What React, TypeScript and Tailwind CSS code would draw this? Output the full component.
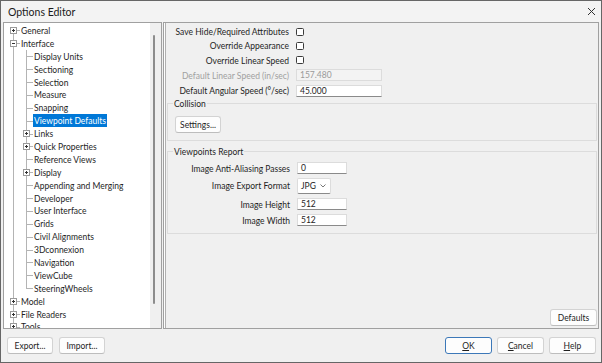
import React from "react";

type TreeNode = {
  label: string;
  level: 0 | 1;
  box?: "+" | "-";
  first?: boolean;
  last?: boolean;
  selected?: boolean;
};

const tree: TreeNode[] = [
  { label: "General", level: 0, box: "+", first: true },
  { label: "Interface", level: 0, box: "-" },
  { label: "Display Units", level: 1 },
  { label: "Sectioning", level: 1 },
  { label: "Selection", level: 1 },
  { label: "Measure", level: 1 },
  { label: "Snapping", level: 1 },
  { label: "Viewpoint Defaults", level: 1, selected: true },
  { label: "Links", level: 1, box: "+" },
  { label: "Quick Properties", level: 1, box: "+" },
  { label: "Reference Views", level: 1 },
  { label: "Display", level: 1, box: "+" },
  { label: "Appending and Merging", level: 1 },
  { label: "Developer", level: 1 },
  { label: "User Interface", level: 1 },
  { label: "Grids", level: 1 },
  { label: "Civil Alignments", level: 1 },
  { label: "3Dconnexion", level: 1 },
  { label: "Navigation", level: 1 },
  { label: "ViewCube", level: 1 },
  { label: "SteeringWheels", level: 1, last: true },
  { label: "Model", level: 0, box: "+" },
  { label: "File Readers", level: 0, box: "+" },
  { label: "Tools", level: 0, box: "+" },
];

// one 13px gutter column of the tree: connector lines and the +/- box
function Gutter({
  line,
  stub,
  box,
}: {
  line?: "full" | "top" | "bottom";
  stub?: boolean;
  box?: "+" | "-";
}) {
  return (
    <span className="relative w-[13px] h-full shrink-0">
      {line === "full" && <span className="absolute left-[6px] top-0 bottom-0 w-px bg-[#b4b4b4]" />}
      {line === "top" && <span className="absolute left-[6px] top-0 h-1/2 w-px bg-[#b4b4b4]" />}
      {line === "bottom" && <span className="absolute left-[6px] top-1/2 bottom-0 w-px bg-[#b4b4b4]" />}
      {stub && <span className="absolute left-[6px] right-0 top-1/2 h-px bg-[#b4b4b4]" />}
      {box && (
        <span className="absolute left-[3px] top-1/2 -mt-[3.5px] w-[7px] h-[7px] border border-[#9a9a9a] bg-white flex items-center justify-center">
          <span className="absolute w-[3px] h-px bg-[#333]" />
          {box === "+" && <span className="absolute w-px h-[3px] bg-[#333]" />}
        </span>
      )}
    </span>
  );
}

function TreeRow({ node }: { node: TreeNode }) {
  return (
    <div className="flex items-center h-[12.9px] whitespace-nowrap">
      {node.level === 0 ? (
        <Gutter line={node.first ? "bottom" : "full"} stub box={node.box} />
      ) : (
        <>
          <Gutter line="full" />
          <Gutter line={node.last ? "top" : "full"} stub box={node.box} />
        </>
      )}
      <span
        className={`px-px h-full pt-[1px] leading-[12px] ${
          node.selected ? "bg-[#0078d7] text-white" : "text-[#1e1e1e]"
        }`}
      >
        {node.label}
      </span>
    </div>
  );
}

function Checkbox() {
  return <span className="block w-[8px] h-[8px] border border-[#3a3a3a] rounded-[1.5px] bg-white" />;
}

function Field({ value, w, disabled }: { value: string; w: string; disabled?: boolean }) {
  return (
    <span
      className={`flex items-center h-[12px] px-[3px] pt-[1px] border border-[#dcdcdc] border-b-[#8a8a8a] ${w} ${
        disabled ? "bg-[#f3f3f3] text-[#9a9a9a] border-b-[#dcdcdc]" : "bg-white text-[#1e1e1e]"
      }`}
    >
      {value}
    </span>
  );
}

function Button({ children, w = "w-[47px]", primary }: { children: React.ReactNode; w?: string; primary?: boolean }) {
  return (
    <button
      className={`h-[17px] ${w} flex items-center justify-center pt-[1px] rounded-[3px] bg-[#fdfdfd] text-[#1e1e1e] border ${
        primary ? "border-[#3c78b8]" : "border-[#d3d3d3] border-b-[#bdbdbd]"
      }`}
    >
      {children}
    </button>
  );
}

const topRows: { label: string; h: string; el: React.ReactNode; dim?: boolean }[] = [
  { label: "Save Hide/Required Attributes", h: "h-[13px]", el: <Checkbox /> },
  { label: "Override Appearance", h: "h-[15px]", el: <Checkbox /> },
  { label: "Override Linear Speed", h: "h-[14px]", el: <Checkbox /> },
  { label: "Default Linear Speed (in/sec)", h: "h-[16px]", el: <Field value="157.480" w="w-[86px]" disabled />, dim: true },
  { label: "Default Angular Speed (°/sec)", h: "h-[15px]", el: <Field value="45.000" w="w-[86px]" /> },
];

export default function App() {
  return (
    <div className="w-[602px] h-[363px] flex flex-col bg-[#f0f0f0] border border-[#666] text-[8.5px] font-['Lato',sans-serif] text-[#1e1e1e] overflow-hidden">
      {/* title bar */}
      <div className="h-[21px] shrink-0 flex items-center justify-between pl-[7px] pr-[5px] pt-[2px] bg-[#f3f3f3]">
        <span className="text-[10.5px] text-[#1a1a1a]">Options Editor</span>
        <svg width="9" height="9" viewBox="0 0 9 9" className="mt-[-2px]">
          <path d="M1 1 L8 8 M8 1 L1 8" stroke="#333" strokeWidth="1" />
        </svg>
      </div>

      {/* main */}
      <div className="h-[307px] shrink-0 flex pl-[2px] pr-[2px] gap-[1px]">
        {/* tree */}
        <div className="w-[159px] h-full border border-[#a0a0a0] flex">
          <div className="flex-1 bg-white overflow-hidden pl-[3px] pt-[1px]">
            {tree.map((n) => (
              <TreeRow key={n.label} node={n} />
            ))}
          </div>
          <div className="w-[11px] bg-[#f0f0f0] pt-[12px] pl-[3px]">
            <div className="w-[2px] h-[269px] rounded-full bg-[#8d8d8d]" />
          </div>
        </div>

        {/* settings panel */}
        <div className="flex-1 h-full border border-[#a0a0a0] shadow-[inset_1px_0_0_#fff,inset_2px_0_0_#b0b0b0] flex flex-col">
          <div className="grid grid-cols-[125px_auto] gap-x-[7px] pt-[2px]">
            {topRows.map((r) => (
              <React.Fragment key={r.label}>
                <div className={`${r.h} flex items-center justify-end whitespace-nowrap pt-[2px] ${r.dim ? "text-[#a0a0a0]" : ""}`}>
                  {r.label}
                </div>
                <div className={`${r.h} flex items-center`}>{r.el}</div>
              </React.Fragment>
            ))}
          </div>

          <fieldset className="-mt-[2px] ml-[3px] mr-[1px] border border-[#dcdcdc] pb-[7px]">
            <legend className="ml-[5px] px-px leading-[12px] pt-[2px]">Collision</legend>
            <div className="pt-[6px] pl-[7px]">
              <Button w="w-[46px]">Settings...</Button>
            </div>
          </fieldset>

          <fieldset className="mt-[3px] ml-[3px] mr-[1px] border border-[#dcdcdc] pb-[6px]">
            <legend className="ml-[5px] px-px leading-[12px] pt-[2px]">Viewpoints Report</legend>
            <div className="pt-[2px] grid grid-cols-[122px_auto] gap-x-[7px]">
              <div className="h-[16px] pt-[2px] flex items-center justify-end">Image Anti-Aliasing Passes</div>
              <div className="h-[16px] flex items-center"><Field value="0" w="w-[50px]" /></div>
              <div className="h-[19px] pt-[2px] flex items-center justify-end">Image Export Format</div>
              <div className="h-[19px] flex items-center">
                <span className="flex items-center justify-between h-[16px] w-[34px] pl-[3px] pr-[4px] pt-[1px] bg-white border border-[#dcdcdc] border-b-[#8a8a8a] rounded-[2px]">
                  JPG
                  <svg width="6" height="4" viewBox="0 0 6 4">
                    <path d="M0.5 0.5 L3 3 L5.5 0.5" fill="none" stroke="#555" strokeWidth="0.8" />
                  </svg>
                </span>
              </div>
              <div className="h-[18px] pt-[2px] flex items-center justify-end">Image Height</div>
              <div className="h-[18px] flex items-center"><Field value="512" w="w-[50px]" /></div>
              <div className="h-[14px] pt-[2px] flex items-center justify-end">Image Width</div>
              <div className="h-[14px] flex items-center"><Field value="512" w="w-[50px]" /></div>
            </div>
          </fieldset>

          <div className="mt-auto flex justify-end pr-[1px] pb-[2px]">
            <Button>Defaults</Button>
          </div>
        </div>
      </div>

      {/* footer */}
      <div className="flex-1 flex items-start justify-between pt-[8px] pl-[6px] pr-[5px]">
        <div className="flex gap-[6px]">
          <Button w="w-[46px]">Export...</Button>
          <Button w="w-[46px]">Import...</Button>
        </div>
        <div className="flex gap-[5px]">
          <Button primary>
            <span className="underline">O</span>K
          </Button>
          <Button>
            <span className="underline">C</span>ancel
          </Button>
          <Button>
            <span className="underline">H</span>elp
          </Button>
        </div>
      </div>
    </div>
  );
}
